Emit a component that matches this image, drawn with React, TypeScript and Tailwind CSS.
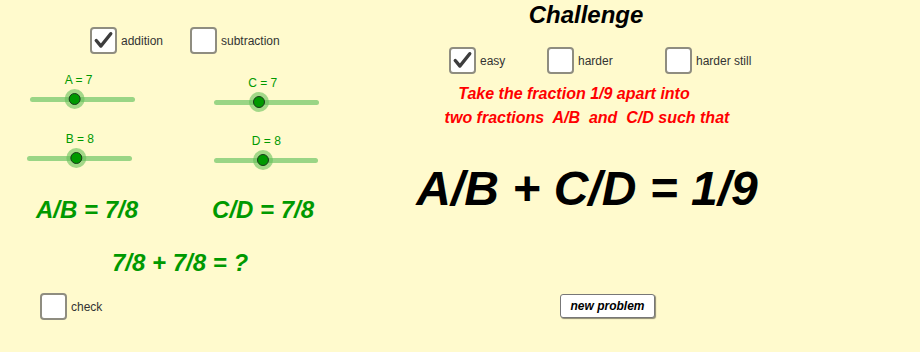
const font = "font-['Liberation_Sans',Arial,sans-serif]";

function Check() {
  return (
    <svg viewBox="0 0 27 27" className="h-full w-full">
      <path d="M5 13.5 L10.5 20 L22 5.5" fill="none" stroke="#3d3d3d" strokeWidth="4" strokeLinecap="round" strokeLinejoin="round" />
    </svg>
  );
}

function CheckBox({ label, checked }: { label: string; checked?: boolean }) {
  return (
    <label className="flex items-center gap-[4px]">
      <span className="block h-[27px] w-[27px] rounded-[4px] border-2 border-[#8f8d80] bg-white">
        {checked && <Check />}
      </span>
      <span className="text-[12px] leading-none text-[#333333]">{label}</span>
    </label>
  );
}

// pos = knob position along the track (0..1)
function Slider({ label, pos, width = 105 }: { label: string; pos: number; width?: number }) {
  return (
    <div className="relative flex h-[35px] flex-col justify-end" style={{ width }}>
      <div className="flex h-[20px] items-center">
        <div className="h-[5px] w-full rounded-full bg-[#9ad585]" />
      </div>
      <div className="absolute top-0 flex -translate-x-1/2 flex-col items-center gap-[3px]" style={{ left: `${pos * 100}%` }}>
        <span className="ml-[7px] whitespace-nowrap text-[12px] leading-none text-[#009900]">{label}</span>
        <span className="flex h-[20px] w-[20px] items-center justify-center rounded-full bg-[#66c25a]/60">
          <span className="h-[12px] w-[12px] rounded-full border border-[#1a3a1a] bg-[#009900]" />
        </span>
      </div>
    </div>
  );
}

export default function App() {
  return (
    <div className={`${font} flex h-[352px] w-[920px] overflow-hidden bg-[#fffacd]`}>
      {/* left: exploration */}
      <section className="flex w-[400px] flex-col">
        <div className="ml-[90px] mt-[27px] grid grid-cols-[100px_auto]">
          <CheckBox label="addition" checked />
          <CheckBox label="subtraction" />
        </div>

        <div className="ml-[27px] mt-[20px] grid grid-cols-[187px_auto] gap-y-[21px]">
          <div className="ml-[3px]">
            <Slider label="A = 7" pos={0.43} />
          </div>
          <div className="mt-[3px]">
            <Slider label="C = 7" pos={0.43} />
          </div>
          <Slider label="B = 8" pos={0.47} />
          <div className="mt-[2px]">
            <Slider label="D = 8" pos={0.47} width={104} />
          </div>
        </div>

        <div className="ml-[36px] mt-[28px] flex gap-[74px] text-[24px] font-bold italic leading-none text-[#009900]">
          <span>A/B = 7/8</span>
          <span>C/D = 7/8</span>
        </div>

        <div className="ml-[112px] mt-[29px] text-[24px] font-bold italic leading-none text-[#009900]">7/8 + 7/8 = ?</div>

        <div className="ml-[40px] mt-[18px]">
          <CheckBox label="check" />
        </div>
      </section>

      {/* right: challenge */}
      <section className="flex w-[374px] flex-col items-center pb-[34px]">
        <h1 className="mt-[3px] -ml-[2px] text-[24px] font-bold italic leading-none text-black">Challenge</h1>

        <div className="ml-[49px] mt-[20px] grid grid-cols-[98px_118px_auto] self-start">
          <CheckBox label="easy" checked />
          <CheckBox label="harder" />
          <CheckBox label="harder still" />
        </div>

        <div className="mt-[8px] flex flex-col items-center whitespace-pre text-[16px] font-bold italic leading-[24px] text-[#ff0000]">
          <span className="-ml-[26px]">Take the fraction 1/9 apart into</span>
          <span>{"two fractions  A/B  and  C/D such that"}</span>
        </div>

        <div className="mt-[35px] whitespace-nowrap text-[48px] font-bold italic leading-none text-black">A/B + C/D = 1/9</div>

        <button className="ml-[41px] mt-auto flex h-[24px] w-[95px] items-center justify-center rounded-[3px] border border-[#777] bg-white text-[12px] font-bold italic leading-none text-black shadow-[1px_1px_1px_rgba(0,0,0,0.45)]">
          new problem
        </button>
      </section>
    </div>
  );
}
